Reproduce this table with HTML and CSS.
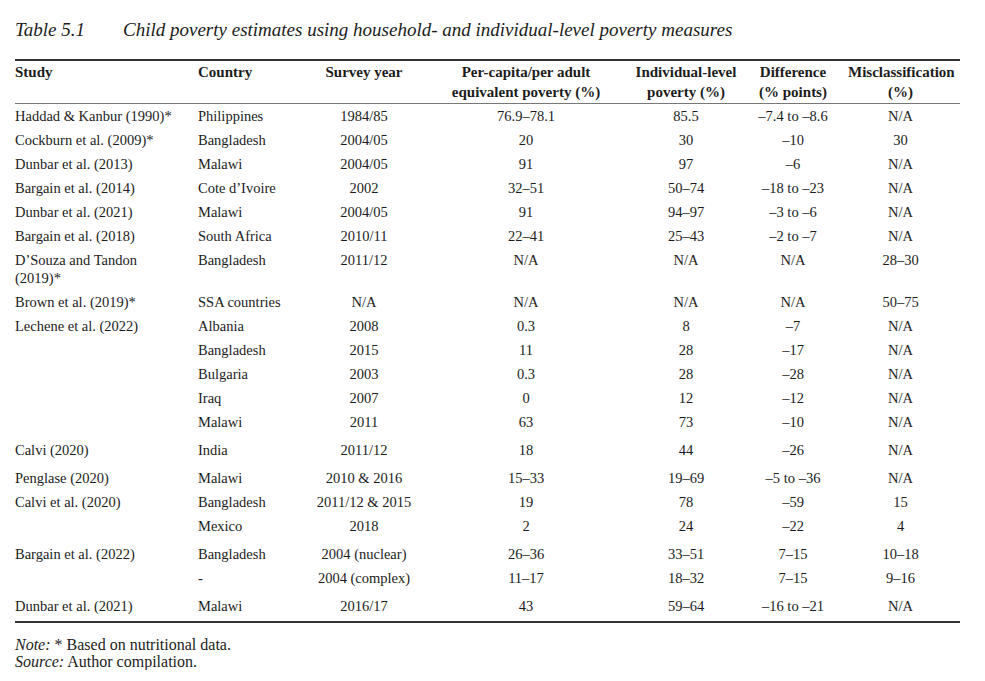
FILE: index.html
```html
<!DOCTYPE html>
<html lang="en">
<head>
<meta charset="utf-8">
<title>Table 5.1</title>
<link rel="stylesheet" href="styles.css">
</head>
<body>
<div class="page">
  <div class="caption">
    <span class="cap-label">Table 5.1</span>
    <span class="cap-title">Child poverty estimates using household- and individual-level poverty measures</span>
  </div>
  <table class="data">
    <colgroup>
      <col class="c1"><col class="c2"><col class="c3"><col class="c4"><col class="c5"><col class="c6"><col class="c7">
    </colgroup>
    <thead>
      <tr>
        <th class="l">Study</th>
        <th class="l">Country</th>
        <th>Survey year</th>
        <th>Per-capita/per adult<br>equivalent poverty (%)</th>
        <th>Individual-level<br>poverty (%)</th>
        <th>Difference<br>(% points)</th>
        <th class="last">Misclassification<br>(%)</th>
      </tr>
    </thead>
    <tbody>
      <tr><td class="l">Haddad &amp; Kanbur (1990)*</td><td class="l">Philippines</td><td>1984/85</td><td>76.9–78.1</td><td>85.5</td><td>–7.4 to –8.6</td><td class="last">N/A</td></tr>
      <tr><td class="l">Cockburn et al. (2009)*</td><td class="l">Bangladesh</td><td>2004/05</td><td>20</td><td>30</td><td>–10</td><td class="last">30</td></tr>
      <tr><td class="l">Dunbar et al. (2013)</td><td class="l">Malawi</td><td>2004/05</td><td>91</td><td>97</td><td>–6</td><td class="last">N/A</td></tr>
      <tr><td class="l">Bargain et al. (2014)</td><td class="l">Cote d’Ivoire</td><td>2002</td><td>32–51</td><td>50–74</td><td>–18 to –23</td><td class="last">N/A</td></tr>
      <tr><td class="l">Dunbar et al. (2021)</td><td class="l">Malawi</td><td>2004/05</td><td>91</td><td>94–97</td><td>–3 to –6</td><td class="last">N/A</td></tr>
      <tr><td class="l">Bargain et al. (2018)</td><td class="l">South Africa</td><td>2010/11</td><td>22–41</td><td>25–43</td><td>–2 to –7</td><td class="last">N/A</td></tr>
      <tr><td class="l">D’Souza and Tandon<br>(2019)*</td><td class="l">Bangladesh</td><td>2011/12</td><td>N/A</td><td>N/A</td><td>N/A</td><td class="last">28–30</td></tr>
      <tr><td class="l">Brown et al. (2019)*</td><td class="l">SSA countries</td><td>N/A</td><td>N/A</td><td>N/A</td><td>N/A</td><td class="last">50–75</td></tr>
      <tr><td class="l">Lechene et al. (2022)</td><td class="l">Albania</td><td>2008</td><td>0.3</td><td>8</td><td>–7</td><td class="last">N/A</td></tr>
      <tr><td class="l"></td><td class="l">Bangladesh</td><td>2015</td><td>11</td><td>28</td><td>–17</td><td class="last">N/A</td></tr>
      <tr><td class="l"></td><td class="l">Bulgaria</td><td>2003</td><td>0.3</td><td>28</td><td>–28</td><td class="last">N/A</td></tr>
      <tr><td class="l"></td><td class="l">Iraq</td><td>2007</td><td>0</td><td>12</td><td>–12</td><td class="last">N/A</td></tr>
      <tr><td class="l"></td><td class="l">Malawi</td><td>2011</td><td>63</td><td>73</td><td>–10</td><td class="last">N/A</td></tr>
      <tr class="grp"><td class="l">Calvi (2020)</td><td class="l">India</td><td>2011/12</td><td>18</td><td>44</td><td>–26</td><td class="last">N/A</td></tr>
      <tr class="grp"><td class="l">Penglase (2020)</td><td class="l">Malawi</td><td>2010 &amp; 2016</td><td>15–33</td><td>19–69</td><td>–5 to –36</td><td class="last">N/A</td></tr>
      <tr><td class="l">Calvi et al. (2020)</td><td class="l">Bangladesh</td><td>2011/12 &amp; 2015</td><td>19</td><td>78</td><td>–59</td><td class="last">15</td></tr>
      <tr><td class="l"></td><td class="l">Mexico</td><td>2018</td><td>2</td><td>24</td><td>–22</td><td class="last">4</td></tr>
      <tr class="grp"><td class="l">Bargain et al. (2022)</td><td class="l">Bangladesh</td><td>2004 (nuclear)</td><td>26–36</td><td>33–51</td><td>7–15</td><td class="last">10–18</td></tr>
      <tr><td class="l"></td><td class="l">-</td><td>2004 (complex)</td><td>11–17</td><td>18–32</td><td>7–15</td><td class="last">9–16</td></tr>
      <tr class="grp lastrow"><td class="l">Dunbar et al. (2021)</td><td class="l">Malawi</td><td>2016/17</td><td>43</td><td>59–64</td><td>–16 to –21</td><td class="last">N/A</td></tr>
    </tbody>
  </table>
  <div class="notes">
    <p><em>Note:</em> * Based on nutritional data.</p>
    <p><em>Source:</em> Author compilation.</p>
  </div>
</div>
</body>
</html>
```
FILE: styles.css
```css
html, body {
  margin: 0;
  padding: 0;
  background: #ffffff;
}
body {
  font-family: "Liberation Serif", "Times New Roman", serif;
  color: #1c1c1c;
}
.page {
  padding: 18px 25px 0 15px;
}
.caption {
  display: flex;
  font-style: italic;
  font-size: 19px;
  line-height: 24px;
  margin-bottom: 17px;
}
.cap-label {
  width: 108px;
}
.data {
  width: 945px;
  border-collapse: collapse;
  table-layout: fixed;
  font-size: 14.5px;
}
.c1 { width: 183px; }
.c2 { width: 112px; }
.c3 { width: 108px; }
.c4 { width: 216px; }
.c5 { width: 104px; }
.c6 { width: 110px; }
.c7 { width: 112px; }
.data thead tr {
  border-top: 2px solid #333;
  border-bottom: 1px solid #777;
}
.data th {
  font-weight: bold;
  font-size: 15px;
  line-height: 20px;
  padding: 1px 0 1px;
  vertical-align: top;
  text-align: center;
}
.data td {
  line-height: 18px;
  padding: 3px 0;
  vertical-align: top;
  text-align: center;
}
.data .l {
  text-align: left;
}
.data .last {
  padding-right: 7px;
}
.data tr.grp td {
  padding-top: 7px;
}
.data tr.lastrow td {
  padding-bottom: 6px;
}
.data tbody tr.lastrow {
  border-bottom: 2px solid #333;
}
.notes {
  margin-top: 13px;
  font-size: 16px;
  line-height: 17px;
}
.notes p {
  margin: 0;
}
```
